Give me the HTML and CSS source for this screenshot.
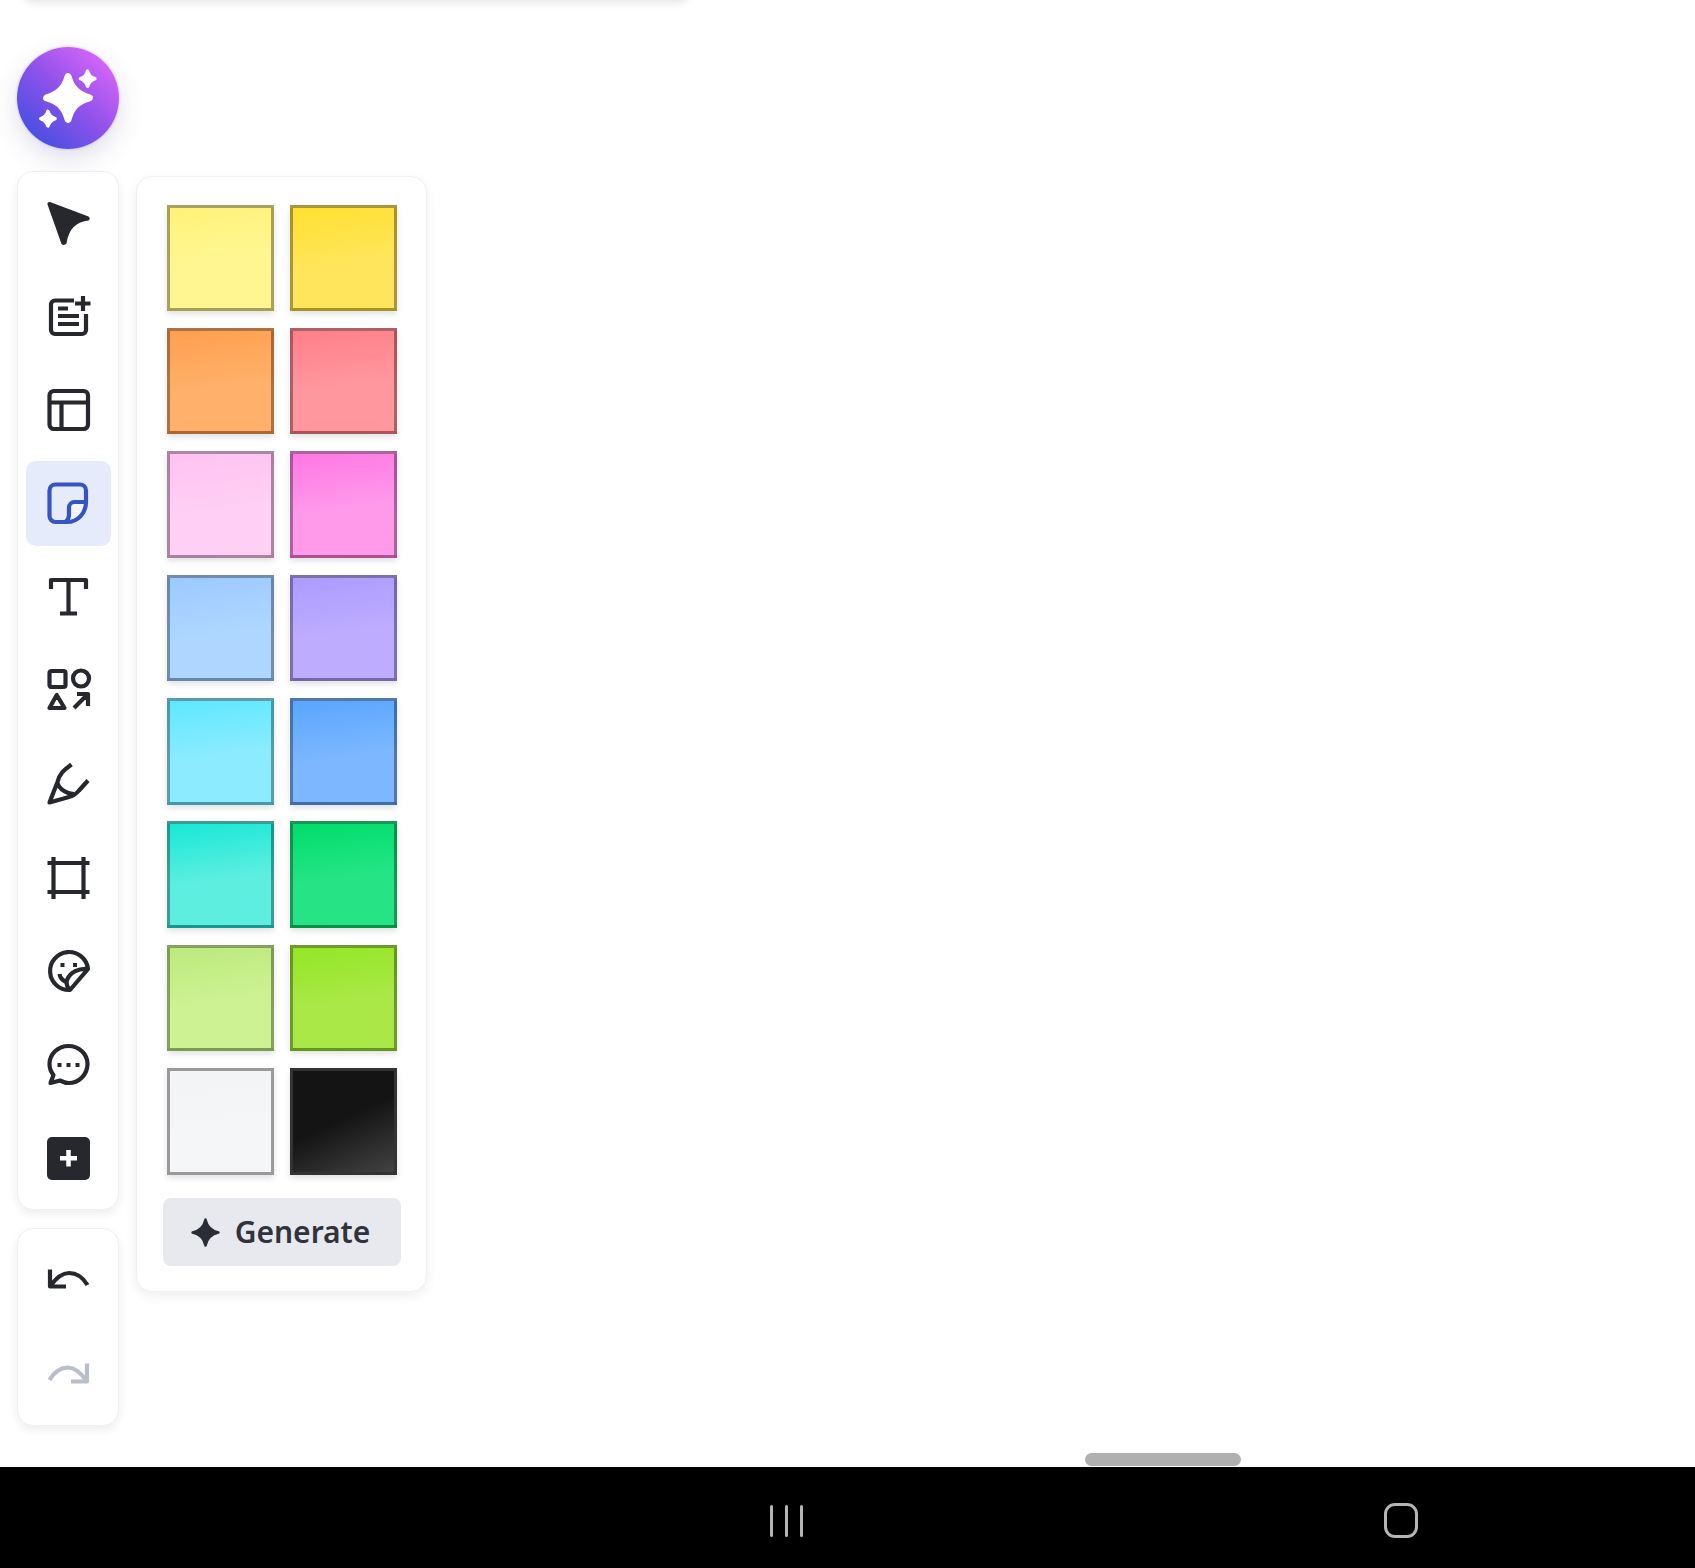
FILE: index.html
```html
<!DOCTYPE html>
<html lang="en">
<head>
  <meta charset="UTF-8">
  <title>Whiteboard - Sticky notes</title>
  <link rel="stylesheet" href="styles.css">
</head>
<body>

  <div class="screen">
    <!-- Top card, mostly scrolled out of view -->
    <div class="top-card"></div>

    <!-- Left column: AI button and toolbars -->
    <div class="left-col">
      <button class="ai-button">
        <svg viewBox="0 0 101.5 101.5" class="ai-icon">
          <path d="M50.8 29.5 C54 41 60 47 72 50.6 C60 54 54 60 50.8 72 C47.5 60 41.5 54 29.5 50.6 C41.5 47 47.5 41 50.8 29.5 Z" fill="#fff" stroke="#fff" stroke-width="7" stroke-linejoin="round"/>
          <path d="M70.2 24 C71.4 28.5 73.4 30.5 77.5 31.6 C73.4 33 71.4 35 70.2 39 C69 35 67 33 63 31.6 C67 30.5 69 28.5 70.2 24 Z" fill="#fff" stroke="#fff" stroke-width="3.4" stroke-linejoin="round"/>
          <path d="M30.8 64 C32 68.3 34 70.3 38 71.3 C34 72.7 32 74.7 30.8 78.6 C29.6 74.7 27.6 72.7 23.6 71.3 C27.6 70.3 29.6 68.3 30.8 64 Z" fill="#fff" stroke="#fff" stroke-width="3.4" stroke-linejoin="round"/>
        </svg>
      </button>

      <div class="toolbar">
        <div class="tool">
          <svg viewBox="0 0 43 43" class="icon">
            <path d="M0.5 2.5 Q0 -0.5 3 0 L41.5 14.5 Q44 16.5 41.5 18.5 C29.5 19.5 21.5 27 19.5 41.5 Q17 44 14.5 42 Z" class="solid"/>
          </svg>
        </div>
        <div class="tool">
          <svg viewBox="0 0 43 43" class="icon">
            <path d="M27 5.5 H8 a4 4 0 0 0 -4 4 V35 a4 4 0 0 0 4 4 H35 a4 4 0 0 0 4 -4 V19 M36 1 V16 M28 8.5 H43.5 M11 13.5 H21 M11 21 H32 M11 29 H32" class="line"/>
          </svg>
        </div>
        <div class="tool">
          <svg viewBox="0 0 43 43" class="icon">
            <rect x="2.5" y="2" width="38.5" height="38" rx="4.5" class="line"/>
            <path d="M2.5 13.5 H41 M14.5 13.5 V40" class="line"/>
          </svg>
        </div>
        <div class="tool active">
          <svg viewBox="0 0 43 43" class="icon">
            <path d="M39 20 C39 31 31 40 20 40 L22 30 Q23 20 30 20 Z" fill="#f4f6fe"/>
            <path d="M20 40 H8.5 a6 6 0 0 1 -6 -6 V8.5 a6 6 0 0 1 6 -6 H33 a6 6 0 0 1 6 6 V20 C39 31 31 40 20 40 Z M39 20 H27.5 a5.5 5.5 0 0 0 -5.5 5.5 V33 Q22 37 18.5 40" class="line"/>
          </svg>
        </div>
        <div class="tool">
          <svg viewBox="0 0 43 43" class="icon">
            <path d="M4 13 V4 H39 V13 M21.5 4 V37.5 M13 37.5 H30" class="line"/>
          </svg>
        </div>
        <div class="tool">
          <svg viewBox="0 0 43 43" class="icon">
            <rect x="2.5" y="2" width="16" height="16" rx="2" class="line"/>
            <circle cx="34" cy="9.5" r="8" class="line"/>
            <path d="M9.7 26 L2.5 39 H17.5 Z M27 39 L41 25 M30 25 H41 V37" class="line"/>
          </svg>
        </div>
        <div class="tool">
          <svg viewBox="0 0 43 43" class="icon">
            <path d="M24.5 1.5 C17 7 12 11 10.5 19 L2.5 39.5 L22 34 C27 33 29 31 32 27.5 L41 17.5 M10.5 20 C12 26 20 31 27 31" class="line"/>
          </svg>
        </div>
        <div class="tool">
          <svg viewBox="0 0 43 43" class="icon">
            <path d="M6.5 0 V42 M36.5 0 V42 M0.5 6 H42.5 M0.5 35 H42.5" class="line"/>
          </svg>
        </div>
        <div class="tool">
          <svg viewBox="0 0 43 43" class="icon">
            <path d="M41 19 A19 19 0 1 0 23 40 Z M41 19 C32 18 23 22 20 30 C19 34 21 38 23 40 M12.5 24 C13 28 15 30 19 32" class="line"/>
            <rect x="13.5" y="13" width="4" height="4" class="solid"/>
            <rect x="26" y="13" width="4" height="4" class="solid"/>
          </svg>
        </div>
        <div class="tool">
          <svg viewBox="0 0 43 43" class="icon">
            <path d="M21.5 2 C11 2 2.5 10 2.5 20 C2.5 24.5 4 28 6.5 31 L3.5 39 L13 36.5 C16 38 18.5 39 21.5 39 C32 39 40.5 30.5 40.5 20 C40.5 10 32 2 21.5 2 Z" class="line"/>
            <rect x="10.5" y="19" width="4" height="4" class="solid"/>
            <rect x="19.5" y="19" width="4" height="4" class="solid"/>
            <rect x="28.5" y="19" width="4" height="4" class="solid"/>
          </svg>
        </div>
        <div class="tool">
          <svg viewBox="0 0 43 43" class="icon">
            <rect x="0" y="0" width="43" height="43" rx="5" class="solid"/>
            <path d="M21.5 13 V29.5 M13 21.2 H30" fill="none" stroke="#fff" stroke-width="4.5"/>
          </svg>
        </div>
      </div>

      <div class="toolbar">
        <div class="tool">
          <svg viewBox="0 0 43 43" class="icon">
            <path d="M3 10.5 V27.5 H19 M3 27.5 C10 17.5 16 14 22 14 C29 14 36 18.5 40.5 26" class="line"/>
          </svg>
        </div>
        <div class="tool disabled">
          <svg viewBox="0 0 43 43" class="icon">
            <path d="M40 10.5 V28.5 H24 M40 28.5 C33 18.5 27 14.5 21 14.5 C14 14.5 7 19.5 2.5 27" class="line"/>
          </svg>
        </div>
      </div>
    </div>

    <!-- Sticky note colours -->
    <div class="note-panel">
      <div class="swatches">
        <div class="swatch pale-yellow"></div>
        <div class="swatch yellow"></div>
        <div class="swatch orange"></div>
        <div class="swatch coral"></div>
        <div class="swatch pale-pink"></div>
        <div class="swatch pink"></div>
        <div class="swatch pale-blue"></div>
        <div class="swatch violet"></div>
        <div class="swatch cyan"></div>
        <div class="swatch blue"></div>
        <div class="swatch teal"></div>
        <div class="swatch green"></div>
        <div class="swatch pale-lime"></div>
        <div class="swatch lime"></div>
        <div class="swatch white"></div>
        <div class="swatch black"></div>
      </div>
      <button class="generate">
        <svg viewBox="0 0 28 28" class="generate-icon">
          <path d="M14 1.5 C15.5 8.5 19.5 12.5 26.5 14 C19.5 15.5 15.5 19.5 14 26.5 C12.5 19.5 8.5 15.5 1.5 14 C8.5 12.5 12.5 8.5 14 1.5 Z" fill="#2a2d36" stroke="#2a2d36" stroke-width="2.4" stroke-linejoin="round"/>
        </svg>
        Generate
      </button>
    </div>

    <div class="scroll-thumb"></div>
  </div>

  <!-- Android navigation bar -->
  <div class="nav-bar">
    <div class="nav-recents"><span></span><span></span><span></span></div>
    <div class="nav-home"></div>
  </div>

</body>
</html>
```

FILE: styles.css
```css
* {
  box-sizing: border-box;
}

html, body {
  margin: 0;
  padding: 0;
  background-color: #fff;
  font-family: "Noto Sans", Arial, sans-serif;
}

.screen {
  position: relative;
  display: flex;
  align-items: flex-start;
  height: 1467px;
  padding-left: 17px;
  overflow: hidden;
}

.top-card {
  position: absolute;
  left: 22px;
  top: -30px;
  width: 668px;
  height: 30px;
  border-radius: 12px;
  background-color: #fff;
  box-shadow: 0 2px 10px rgba(0,0,0,0.12);
}

.left-col {
  display: flex;
  flex-direction: column;
  padding-top: 46.5px;
  width: 102px;
}

.ai-button {
  width: 102px;
  height: 102px;
  padding: 0;
  border: none;
  border-radius: 50%;
  background: linear-gradient(222deg, #e468fb 5%, #8f52ea 50%, #3d4fe2 92%);
  box-shadow: 0 10px 26px rgba(60,50,120,0.16), 0 0 3px rgba(150,90,240,0.4);
  margin-bottom: 22.5px;
}

.ai-icon {
  display: block;
  width: 100%;
  height: 100%;
}

.toolbar {
  display: flex;
  flex-direction: column;
  gap: 8.6px;
  padding: 8.5px 8px 8px;
  margin-bottom: 18px;
  background-color: #fff;
  border: 1px solid #f0f0f2;
  border-radius: 16px;
  box-shadow: 0 4px 10px rgba(0,0,0,0.07);
}

.tool {
  display: flex;
  align-items: center;
  justify-content: center;
  flex-shrink: 0;
  width: 85px;
  height: 85px;
  border-radius: 10px;
  margin-left: -0.5px;
  color: #26282d;
}

.tool.active {
  background-color: #e6ebfc;
  color: #3655c2;
}

.tool.disabled {
  color: #b9bec9;
}

.icon {
  display: block;
  width: 43px;
  height: 43px;
  overflow: visible;
}

.line {
  fill: none;
  stroke: currentColor;
  stroke-width: 4.2;
  stroke-linejoin: round;
}

.solid {
  fill: currentColor;
}

.note-panel {
  display: flex;
  flex-direction: column;
  gap: 23.7px;
  width: 291px;
  margin-top: 176px;
  margin-left: 17px;
  padding: 27.5px 25px 25px;
  background-color: #fff;
  border: 1px solid #f0f0f2;
  border-radius: 16px;
  box-shadow: 0 4px 12px rgba(0,0,0,0.07);
}

.swatches {
  display: grid;
  grid-template-columns: 107px 107px;
  grid-auto-rows: 106.5px;
  column-gap: 16px;
  row-gap: 16.9px;
  justify-content: center;
}

.swatch {
  border: 3px solid rgba(0,0,0,0.34);
  background-clip: border-box;
  background-image: linear-gradient(172deg, var(--top), var(--bottom) 55%);
  box-shadow: 0 3px 6px rgba(0,0,0,0.12);
}

.pale-yellow { --top: #fff27a; --bottom: #fff692; }
.yellow { --top: #ffe030; --bottom: #ffe55c; }
.orange { --top: #ff9f4f; --bottom: #ffb06a; }
.coral { --top: #ff7f88; --bottom: #ff979f; }
.pale-pink { --top: #ffc2f2; --bottom: #ffcff5; }
.pink { --top: #ff78e4; --bottom: #ff9aeb; }
.pale-blue { --top: #9ccaff; --bottom: #aed6ff; }
.violet { --top: #ad9cff; --bottom: #bdacff; }
.cyan { --top: #5ee8ff; --bottom: #8debff; }
.blue { --top: #5aa5ff; --bottom: #7cb7ff; }
.teal { --top: #18e8d6; --bottom: #5eeee0; }
.green { --top: #00dd6b; --bottom: #26e486; }
.pale-lime { --top: #bcea7c; --bottom: #cdf294; }
.lime { --top: #94e626; --bottom: #aae848; }

.swatch.white {
  --top: #f3f4f6;
  --bottom: #f5f6f8;
  border-color: #9a9a9c;
}

.swatch.black {
  border-color: #333;
  background-image: linear-gradient(155deg, #141414 48%, #424242 100%);
}

.generate {
  display: flex;
  align-items: center;
  justify-content: center;
  gap: 15px;
  width: 238px;
  height: 68px;
  margin-left: 1px;
  padding: 0 3px 2px 0;
  border: none;
  border-radius: 8px;
  background-color: #e8e9ee;
  color: #30333c;
  font-family: "Noto Sans", Arial, sans-serif;
  font-size: 30px;
  font-weight: 600;
}

.generate-icon {
  width: 29px;
  height: 29px;
  margin-top: 2px;
}

.scroll-thumb {
  position: absolute;
  left: 1085px;
  top: 1453px;
  width: 156px;
  height: 13px;
  border-radius: 7px;
  background-color: #b0b0b0;
}

.nav-bar {
  display: flex;
  justify-content: space-between;
  align-items: flex-start;
  height: 101px;
  padding: 36px 277px 0 770px;
  background-color: #000;
}

.nav-recents {
  display: flex;
  gap: 12.5px;
  padding-top: 1.5px;
}

.nav-recents span {
  width: 2.5px;
  height: 32px;
  border-radius: 2px;
  background-color: #b5b5b5;
}

.nav-home {
  width: 34px;
  height: 35px;
  border: 3px solid #b5b5b5;
  border-radius: 11px;
}
```
